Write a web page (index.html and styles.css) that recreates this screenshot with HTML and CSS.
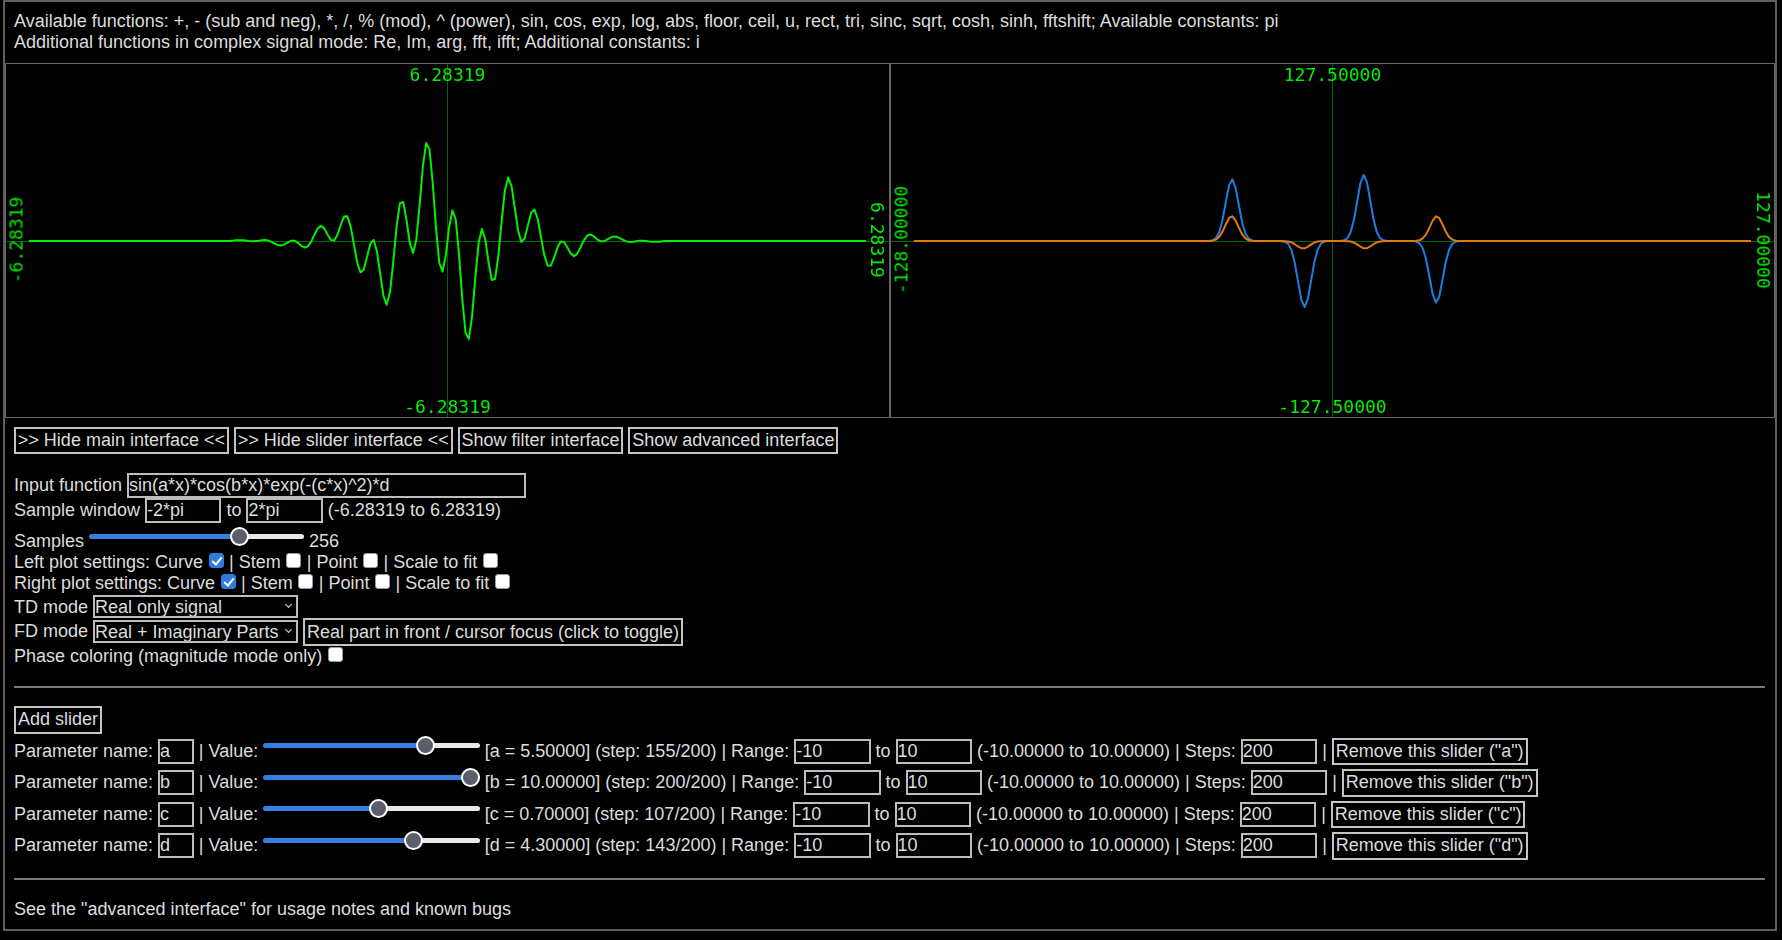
FILE: index.html
```html
<!DOCTYPE html>
<html lang="en">
<head>
<meta charset="utf-8">
<title>Signal plotter</title>
<link rel="stylesheet" href="styles.css">
</head>
<body>
<div class="app">
  <div class="info">Available functions: +, - (sub and neg), *, /, % (mod), ^ (power), sin, cos, exp, log, abs, floor, ceil, u, rect, tri, sinc, sqrt, cosh, sinh, fftshift; Available constants: pi<br>Additional functions in complex signal mode: Re, Im, arg, fft, ifft; Additional constants: i</div>

  <div class="plots">
    <div class="plot">
      <canvas id="td" class="plot-canvas" width="883" height="353"></canvas>
      <span class="lbl lbl-top">6.28319</span>
      <span class="lbl lbl-bottom">-6.28319</span>
      <span class="lbl lbl-left">-6.28319</span>
      <span class="lbl lbl-right">6.28319</span>
    </div>
    <div class="plot">
      <canvas id="fd" class="plot-canvas" width="883" height="353"></canvas>
      <span class="lbl lbl-top">127.50000</span>
      <span class="lbl lbl-bottom">-127.50000</span>
      <span class="lbl lbl-left">-128.00000</span>
      <span class="lbl lbl-right">127.00000</span>
    </div>
  </div>

  <div class="controls">
    <div class="btnrow"><button class="btn">&gt;&gt; Hide main interface &lt;&lt;</button> <button class="btn">&gt;&gt; Hide slider interface &lt;&lt;</button> <button class="btn">Show filter interface</button> <button class="btn">Show advanced interface</button></div>

    <div class="mainpanel">
      <div class="row">Input function <input class="txt txt-fn" type="text" value="sin(a*x)*cos(b*x)*exp(-(c*x)^2)*d"></div>
      <div class="row">Sample window <input class="txt txt-num" type="text" value="-2*pi"> to <input class="txt txt-num" type="text" value="2*pi"> (-6.28319 to 6.28319)</div>
      <div class="row">Samples <input class="range range-samples" type="range" min="0" max="100" value="72" style="--p:70%"> 256</div>
      <div class="row">Left plot settings: Curve <input class="cb" type="checkbox" checked> | Stem <input class="cb" type="checkbox"> | Point <input class="cb" type="checkbox"> | Scale to fit <input class="cb" type="checkbox"></div>
      <div class="row">Right plot settings: Curve <input class="cb" type="checkbox" checked> | Stem <input class="cb" type="checkbox"> | Point <input class="cb" type="checkbox"> | Scale to fit <input class="cb" type="checkbox"></div>
      <div class="row row-sel">TD mode <span class="selwrap"><select class="sel"><option>Real only signal</option></select></span></div>
      <div class="row row-sel">FD mode <span class="selwrap"><select class="sel"><option>Real + Imaginary Parts</option></select></span> <button class="btn btn-tall">Real part in front / cursor focus (click to toggle)</button></div>
      <div class="row">Phase coloring (magnitude mode only) <input class="cb" type="checkbox"></div>
    </div>

    <hr class="rule">

    <div class="sliderpanel">
      <div class="addrow"><button class="btn btn-tall">Add slider</button></div>
      <div class="srow">Parameter name: <input class="txt txt-name" type="text" value="a"> | Value: <input class="range" type="range" min="0" max="200" value="155" style="--p:75.1%"> [a = 5.50000] (step: 155/200) | Range: <input class="txt txt-num" type="text" value="-10"> to <input class="txt txt-num" type="text" value="10"> (-10.00000 to 10.00000) | Steps: <input class="txt txt-num" type="text" value="200"> | <button class="btn btn-tall">Remove this slider ("a")</button></div>
      <div class="srow">Parameter name: <input class="txt txt-name" type="text" value="b"> | Value: <input class="range" type="range" min="0" max="200" value="200" style="--p:95.6%"> [b = 10.00000] (step: 200/200) | Range: <input class="txt txt-num" type="text" value="-10"> to <input class="txt txt-num" type="text" value="10"> (-10.00000 to 10.00000) | Steps: <input class="txt txt-num" type="text" value="200"> | <button class="btn btn-tall">Remove this slider ("b")</button></div>
      <div class="srow">Parameter name: <input class="txt txt-name" type="text" value="c"> | Value: <input class="range" type="range" min="0" max="200" value="107" style="--p:53.2%"> [c = 0.70000] (step: 107/200) | Range: <input class="txt txt-num" type="text" value="-10"> to <input class="txt txt-num" type="text" value="10"> (-10.00000 to 10.00000) | Steps: <input class="txt txt-num" type="text" value="200"> | <button class="btn btn-tall">Remove this slider ("c")</button></div>
      <div class="srow">Parameter name: <input class="txt txt-name" type="text" value="d"> | Value: <input class="range" type="range" min="0" max="200" value="143" style="--p:69.6%"> [d = 4.30000] (step: 143/200) | Range: <input class="txt txt-num" type="text" value="-10"> to <input class="txt txt-num" type="text" value="10"> (-10.00000 to 10.00000) | Steps: <input class="txt txt-num" type="text" value="200"> | <button class="btn btn-tall">Remove this slider ("d")</button></div>
    </div>

    <hr class="rule">

    <div class="footer">See the "advanced interface" for usage notes and known bugs</div>
  </div>
</div>
<script src="plot.js"></script>
</body>
</html>
```

FILE: styles.css
```css
html, body {
  margin: 0;
  padding: 0;
  background: #000;
}

body {
  font: 18px "Liberation Sans", Arial, sans-serif;
  color: #dcdcdc;
}

.app {
  margin-left: 3px;
  width: 1774px;
  box-sizing: border-box;
  border: 2px solid #5f5f5f;
  background: #000;
}

.info {
  padding: 9px 9px 9.6px;
  line-height: normal;
  white-space: nowrap;
}

.plots {
  display: flex;
}

.plot {
  position: relative;
  flex: 1 1 0;
  height: 355px;
  box-sizing: border-box;
  border: 1px solid #666;
}

.plot-canvas {
  display: block;
}

.lbl {
  position: absolute;
  font: 18px "DejaVu Sans Mono", monospace;
  color: #00f000;
  white-space: nowrap;
  line-height: normal;
}

.lbl-top {
  top: 0;
  left: 50%;
  transform: translateX(-50%);
}

.lbl-bottom {
  bottom: 0;
  left: 50%;
  transform: translateX(-50%);
}

.lbl-left {
  left: 10.4px;
  top: 50%;
  transform: translate(-50%, -50%) rotate(-90deg);
}

.lbl-right {
  right: 10.9px;
  top: 50%;
  transform: translate(50%, -50%) rotate(90deg);
}

.controls {
  padding: 9px 10px 9px 9px;
  white-space: nowrap;
}

.btn {
  font: inherit;
  color: #dcdcdc;
  background: #000;
  border: 2px solid #c4c4c4;
  padding: 1px 1.85px;
  margin: 0;
  line-height: normal;
  vertical-align: baseline;
}

.btn-tall {
  padding: 1.3px 1.9px;
}

.mainpanel {
  margin-top: 19.2px;
}

.txt {
  font: inherit;
  color: #dcdcdc;
  background: #000;
  border: 2px solid #bdbdbd;
  padding: 0;
  margin: 0;
  line-height: normal;
  box-sizing: border-box;
  vertical-align: baseline;
}

.txt-fn { width: 399px; }
.txt-num { width: 76.4px; }
.txt-name { width: 35.8px; }

.range {
  -webkit-appearance: none;
  appearance: none;
  width: 216.5px;
  height: 19px;
  margin: 2.8px 0 5.4px;
  padding: 0;
  background: transparent;
  vertical-align: text-bottom;
}

.range-samples {
  width: 215px;
  margin-top: 4px;
}

.range::-webkit-slider-runnable-track {
  height: 5px;
  border-radius: 3px;
  background: linear-gradient(to right, #3480dc var(--p), #e8e8e8 var(--p));
}

.range::-webkit-slider-thumb {
  -webkit-appearance: none;
  appearance: none;
  width: 19px;
  height: 19px;
  box-sizing: border-box;
  border-radius: 50%;
  border: 2px solid #fff;
  background: #5c5f6b;
  margin-top: -7px;
}

.cb {
  -webkit-appearance: none;
  appearance: none;
  position: relative;
  width: 15px;
  height: 15px;
  margin: 0 0.5px;
  box-sizing: border-box;
  border: 1px solid #9a9aa4;
  border-radius: 3px;
  background: #fff;
  vertical-align: baseline;
}

.cb:checked {
  background: #2f7bd9;
  border-color: #2f7bd9;
}

.cb:checked::after {
  content: "";
  position: absolute;
  left: 4px;
  top: 1px;
  width: 4px;
  height: 8px;
  border: solid #fff;
  border-width: 0 2px 2px 0;
  transform: rotate(40deg);
}

.row-sel {
  padding-top: 0.5px;
}

.selwrap {
  position: relative;
  display: inline-block;
}

.selwrap::after {
  content: "";
  position: absolute;
  right: 7.5px;
  top: 7.5px;
  width: 4px;
  height: 4px;
  border: solid #dcdcdc;
  border-width: 0 1.3px 1.3px 0;
  transform: rotate(45deg);
  pointer-events: none;
}

.sel {
  -webkit-appearance: none;
  appearance: none;
  font: inherit;
  color: #dcdcdc;
  background: #000;
  border: 2px solid #bdbdbd;
  border-radius: 0;
  padding: 0 12px 0 0;
  margin: 0;
  width: 205px;
  height: 23.3px;
  line-height: normal;
  box-sizing: border-box;
}

.rule {
  border: none;
  height: 2px;
  background: #7a7a7a;
  margin: 18.7px 0 18.3px;
}

.footer {
  line-height: normal;
}
```

FILE: plot.js
```js
(function () {
  var N = 256;
  var a = -2 * Math.PI, b = 2 * Math.PI;
  var pa = 5.5, pb = 10, pc = 0.7, pd = 4.3;
  var ys = [];
  for (var n = 0; n < N; n++) {
    var x = a + n * (b - a) / (N - 1);
    ys.push(Math.sin(pa * x) * Math.cos(pb * x) * Math.exp(-Math.pow(pc * x, 2)) * pd);
  }
  var re = [], im = [];
  for (var k = -128; k < 128; k++) {
    var sr = 0, si = 0;
    for (var m = 0; m < N; m++) {
      var ang = -2 * Math.PI * k * (m - N / 2) / N;
      sr += ys[m] * Math.cos(ang);
      si += ys[m] * Math.sin(ang);
    }
    re.push(sr);
    im.push(si);
  }

  function setup(id) {
    var c = document.getElementById(id);
    var g = c.getContext('2d');
    var W = c.width, H = c.height;
    g.fillStyle = '#000';
    g.fillRect(0, 0, W, H);
    g.strokeStyle = '#006400';
    g.lineWidth = 1;
    g.beginPath();
    g.moveTo(441.5, 0); g.lineTo(441.5, H);
    g.moveTo(0, 177.5); g.lineTo(W, 177.5);
    g.stroke();
    return { g: g, W: W, H: H };
  }

  function curve(p, vals, yr, color) {
    var mg = 23, g = p.g, W = p.W, H = p.H;
    g.strokeStyle = color;
    g.lineWidth = 2;
    g.lineJoin = 'round';
    g.beginPath();
    for (var i = 0; i < vals.length; i++) {
      var x = mg + i * (W - 2 * mg) / (vals.length - 1);
      var y = 177 - vals[i] / yr * (H / 2 - mg);
      if (i) g.lineTo(x, y); else g.moveTo(x, y);
    }
    g.stroke();
  }

  var td = setup('td');
  curve(td, ys, 2 * Math.PI, '#00f000');
  var fd = setup('fd');
  curve(fd, im, 127.5, '#1c7ee0');
  curve(fd, re, 127.5, '#e07a10');
})();
```
